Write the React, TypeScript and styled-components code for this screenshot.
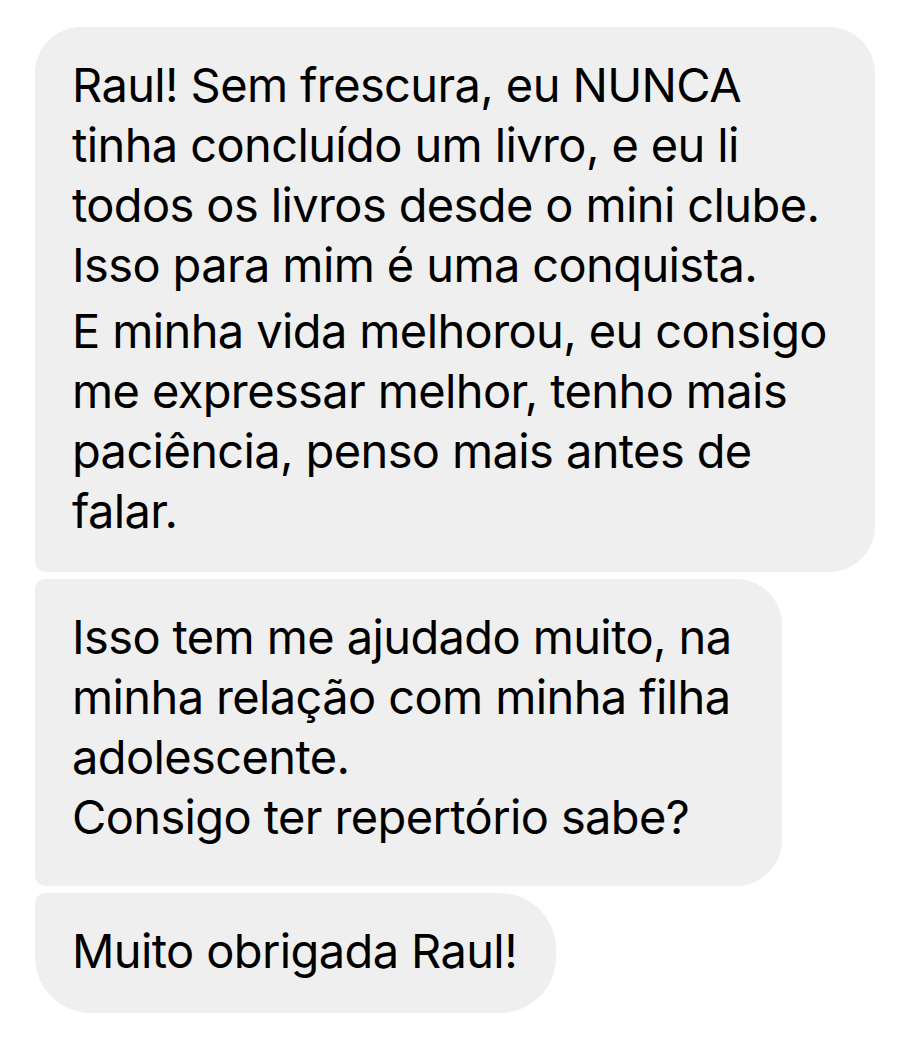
import React from "react";
import styled, { createGlobalStyle } from "styled-components";

const Global = createGlobalStyle`
  html, body {
    margin: 0;
    padding: 0;
    background: #ffffff;
  }
  body {
    font-family: Inter, "Liberation Sans", Arial, sans-serif;
    -webkit-font-smoothing: antialiased;
  }
`;

const Thread = styled.div`
  display: flex;
  flex-direction: column;
  align-items: flex-start;
  gap: 7px;
  padding: 27px 0 0 35px;
`;

type Corners = { tl: number; tr: number; br: number; bl: number };

const Bubble = styled.div<{ $w: number; $pb: number; $r: Corners }>`
  box-sizing: border-box;
  width: ${(p) => p.$w}px;
  background: #efefef;
  color: #000000;
  padding: 28px 0 ${(p) => p.$pb}px 37px;
  border-radius: ${(p) => `${p.$r.tl}px ${p.$r.tr}px ${p.$r.br}px ${p.$r.bl}px`};
  font-family: Inter, "Liberation Sans", Arial, sans-serif;
  font-size: 47px;
  line-height: 60px;
  letter-spacing: -0.62px;
`;

const Para = styled.p`
  margin: 0;
  & + & {
    margin-top: 6px;
  }
`;

const Line = styled.span`
  display: block;
  white-space: nowrap;
`;

const L = 46;
const S = 10;

const messages: { w: number; pb: number; r: Corners; paras: string[][] }[] = [
  {
    w: 840,
    pb: 31,
    r: { tl: L, tr: L, br: L, bl: S },
    paras: [
      [
        "Raul! Sem frescura, eu NUNCA",
        "tinha concluído um livro, e eu li",
        "todos os livros desde o mini clube.",
        "Isso para mim é uma conquista.",
      ],
      [
        "E minha vida melhorou, eu consigo",
        "me expressar melhor, tenho mais",
        "paciência, penso mais antes de",
        "falar.",
      ],
    ],
  },
  {
    w: 747,
    pb: 39,
    r: { tl: S, tr: L, br: L, bl: S },
    paras: [
      [
        "Isso tem me ajudado muito, na",
        "minha relação com minha filha",
        "adolescente.",
        "Consigo ter repertório sabe?",
      ],
    ],
  },
  {
    w: 521,
    pb: 32,
    r: { tl: S, tr: L + 10, br: L + 10, bl: L + 10 },
    paras: [["Muito obrigada Raul!"]],
  },
];

export default function App() {
  return (
    <>
      <Global />
      <Thread>
        {messages.map((m, i) => (
          <Bubble key={i} $w={m.w} $pb={m.pb} $r={m.r}>
            {m.paras.map((p, j) => (
              <Para key={j}>
                {p.map((line, k) => (
                  <Line key={k}>{line}</Line>
                ))}
              </Para>
            ))}
          </Bubble>
        ))}
      </Thread>
    </>
  );
}
